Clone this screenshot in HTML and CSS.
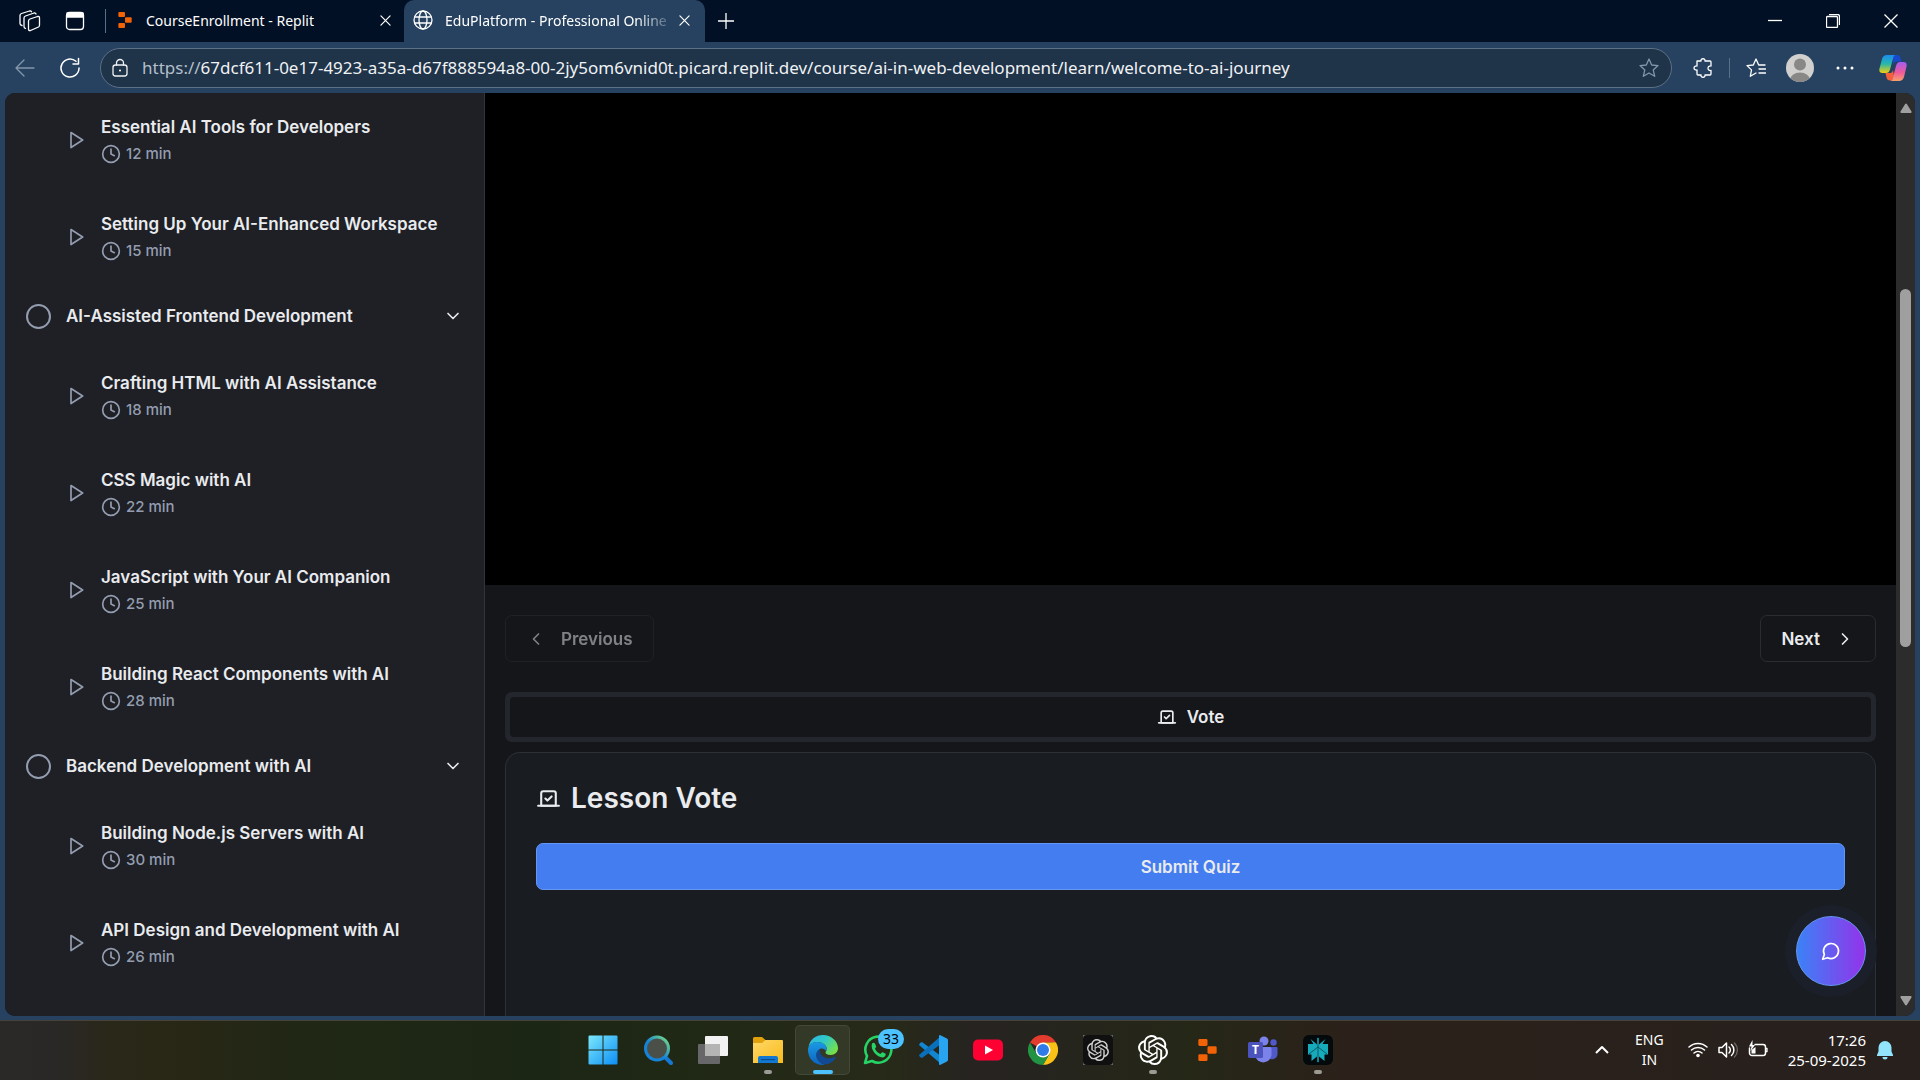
FILE: index.html
```html
<!DOCTYPE html>
<html lang="en">
<head>
<meta charset="utf-8">
<meta name="viewport" content="width=device-width, initial-scale=1">
<title>EduPlatform - Professional Online</title>
<link rel="stylesheet" href="styles.css">
</head>
<body>
<svg class="sprite" aria-hidden="true">
  <symbol id="play" viewBox="0 0 24 24"><path d="M6 3l14 9-14 9z"/></symbol>
  <symbol id="clock" viewBox="0 0 24 24"><circle cx="12" cy="12" r="10"/><path d="M12 6v6l4 2"/></symbol>
  <symbol id="down" viewBox="0 0 24 24"><path d="m6 9 6 6 6-6"/></symbol>
  <symbol id="vote" viewBox="0 0 24 24"><path d="m9 12 2 2 4-4"/><path d="M5 7c0-1.100.9-2 2-2h10a2 2 0 0 1 2 2v12H5V7Z"/><path d="M22 19H2"/></symbol>
  <symbol id="cross" viewBox="0 0 12 12"><path d="M1 1l10 10M11 1L1 11"/></symbol>
  <symbol id="replit" viewBox="0 0 20 24"><g fill="#f26207" stroke="none"><rect x="0" y="0" width="10" height="7.500" rx="1.500"/><rect x="10" y="8" width="10" height="8" rx="1.500"/><rect x="0" y="16.500" width="10" height="7.500" rx="1.500"/></g></symbol>
  <symbol id="knot" viewBox="0 0 24 24"><path stroke="none" fill="#fff" d="M22.2819 9.8211a5.9847 5.9847 0 0 0-.5157-4.9108 6.0462 6.0462 0 0 0-6.5098-2.9A6.0651 6.0651 0 0 0 4.9807 4.1818a5.9847 5.9847 0 0 0-3.9977 2.9 6.0462 6.0462 0 0 0 .7427 7.0966 5.98 5.98 0 0 0 .511 4.9107 6.051 6.051 0 0 0 6.5146 2.9001A5.9847 5.9847 0 0 0 13.2599 24a6.0557 6.0557 0 0 0 5.7718-4.2058 5.9894 5.9894 0 0 0 3.9977-2.9001 6.0557 6.0557 0 0 0-.7475-7.0729zm-9.022 12.6081a4.4755 4.4755 0 0 1-2.8764-1.0408l.1419-.0804 4.7783-2.7582a.7948.7948 0 0 0 .3927-.6813v-6.7369l2.02 1.1686a.071.071 0 0 1 .038.052v5.5826a4.504 4.504 0 0 1-4.4945 4.4944zm-9.6607-4.1254a4.4708 4.4708 0 0 1-.5346-3.0137l.142.0852 4.783 2.7582a.7712.7712 0 0 0 .7806 0l5.8428-3.3685v2.3324a.0804.0804 0 0 1-.0332.0615L9.74 19.9502a4.4992 4.4992 0 0 1-6.1408-1.6464zM2.3408 7.8956a4.485 4.485 0 0 1 2.3655-1.9728V11.6a.7664.7664 0 0 0 .3879.6765l5.8144 3.3543-2.0201 1.1685a.0757.0757 0 0 1-.071 0l-4.8303-2.7865A4.504 4.504 0 0 1 2.3408 7.872zm16.5963 3.8558L13.1038 8.364 15.1192 7.2a.0757.0757 0 0 1 .071 0l4.8303 2.7913a4.4944 4.4944 0 0 1-.6765 8.1042v-5.6772a.79.79 0 0 0-.407-.667zm2.0107-3.0231l-.142-.0852-4.7735-2.7818a.7759.7759 0 0 0-.7854 0L9.409 9.2297V6.8974a.0662.0662 0 0 1 .0284-.0615l4.8303-2.7866a4.4992 4.4992 0 0 1 6.6802 4.66zM8.3065 12.863l-2.02-1.1638a.0804.0804 0 0 1-.038-.0567V6.0742a4.4992 4.4992 0 0 1 7.3757-3.4537l-.142.0805L8.704 5.459a.7948.7948 0 0 0-.3927.6813zm1.0976-2.3654l2.602-1.4998 2.6069 1.4998v2.9994l-2.5974 1.4997-2.6067-1.4997Z"/></symbol>
</svg>

<div class="browser">
  <header class="tabstrip">
    <button class="bare" aria-label="Workspaces"><svg class="i22" viewBox="0 0 22 22"><path d="M9.500 11Q9.500 9.500 11 9l7.500-2.500Q20.500 6 20.500 8v7q0 1.500-1 2l-8 3.500q-2 .5-2-1.500zM6.500 18.500Q5 18 5 16.500V8Q5 6.500 6.500 6L15 3q1.500-.4 2 1M3 15.500Q1 15 1 13.500V5.500Q1 4 2.500 3.500L10.500 1q1.500-.4 2 .8"/></svg></button>
    <button class="bare tab-actions" aria-label="Tab actions"><svg class="i20" viewBox="0 0 20 20"><rect x="1.500" y="1.500" width="17" height="17" rx="3"/><path d="M2 2h16v4H2z" fill="#fff"/></svg></button>
    <span class="divider strip-divider"></span>
    <div class="tab">
      <svg class="tab-replit"><use href="#replit"/></svg>
      <span class="tab-title">CourseEnrollment - Replit</span>
      <button class="bare" aria-label="Close tab"><svg class="i11"><use href="#cross"/></svg></button>
    </div>
    <div class="tab active">
      <svg class="i20" viewBox="0 0 20 20"><circle cx="10" cy="10" r="9"/><ellipse cx="10" cy="10" rx="4" ry="9"/><path d="M2 7h16M2 13h16"/></svg>
      <span class="tab-title fade">EduPlatform - Professional Online</span>
      <button class="bare" aria-label="Close tab"><svg class="i11"><use href="#cross"/></svg></button>
    </div>
    <button class="bare new-tab" aria-label="New tab"><svg class="i16" viewBox="0 0 16 16"><path d="M8 0v16M0 8h16"/></svg></button>
    <div class="window-controls">
      <button class="bare" aria-label="Minimize"><svg class="i14" viewBox="0 0 14 14"><path d="M0 6.500h14"/></svg></button>
      <button class="bare" aria-label="Restore"><svg class="i14" viewBox="0 0 14 14"><rect x=".5" y="2.500" width="11" height="11" rx="1"/><path d="M3 .5h8.500a2 2 0 0 1 2 2V11"/></svg></button>
      <button class="bare" aria-label="Close"><svg class="i14" viewBox="0 0 14 14"><path d="M.5.5l13 13M13.500.5l-13 13"/></svg></button>
    </div>
  </header>

  <div class="toolbar">
    <button class="bare dim" aria-label="Back"><svg class="i20" viewBox="0 0 20 20"><path d="M19 10H1M9 2L1 10l8 8"/></svg></button>
    <button class="bare reload" aria-label="Reload"><svg class="i22" viewBox="0 0 22 22"><path d="M20 11a9 9 0 1 1-3-6.700M19.500 1.500v5.500H14" stroke-width="1.500"/></svg></button>
    <div class="address">
      <svg class="i20" viewBox="0 0 20 20"><rect x="3" y="7" width="14" height="11" rx="2.500"/><path d="M6.500 7V5a3.500 3.500 0 0 1 7 0v2"/><circle cx="10" cy="12.500" r="1" fill="#fff" stroke="none"/></svg>
      <label class="scheme" for="url">https://</label>
      <input id="url" class="url" type="text" value="67dcf611-0e17-4923-a35a-d67f888594a8-00-2jy5om6vnid0t.picard.replit.dev/course/ai-in-web-development/learn/welcome-to-ai-journey">
      <button class="bare dim" aria-label="Add to favorites"><svg class="i20" viewBox="0 0 20 20"><path d="M10 1l2.700 6 6.300.6-4.800 4.300 1.500 6.400L10 15l-5.700 3.300 1.500-6.400L1 7.600 7.300 7z"/></svg></button>
    </div>
    <div class="tools">
      <button class="bare" aria-label="Extensions"><svg class="i20" viewBox="0 0 20 20"><path d="M4 3h4c-.5-3 4.500-3 4 0h5a1 1 0 0 1 1 1v4c-4-.5-4 5 0 4.500V16a1 1 0 0 1-1 1h-5c.5 3-4.500 3-4 0H5a1 1 0 0 1-1-1v-4c-4 .5-4-4.500 0-4z"/></svg></button>
      <span class="divider"></span>
      <button class="bare" aria-label="Favorites"><svg class="i20" viewBox="0 0 20 20"><path d="M19 7h-6.300L10 1 7.300 7 1 7.600l4.500 4.300L4.300 18.300 10 15M13 11h6.500M13 15h6.500"/></svg></button>
      <button class="bare profile" aria-label="Profile"><svg class="i28" viewBox="0 0 28 28"><clipPath id="round"><circle cx="14" cy="14" r="14"/></clipPath><g clip-path="url(#round)" stroke="none"><rect width="28" height="28" fill="#d2d0ce"/><circle cx="14" cy="10.500" r="6" fill="#8a8886"/><ellipse cx="14" cy="26" rx="10" ry="7.500" fill="#8a8886"/></g></svg></button>
      <button class="bare menu" aria-label="Menu"><svg class="i18" viewBox="0 0 18 18"><g fill="#fff" stroke="none"><circle cx="2" cy="9" r="1.500"/><circle cx="9" cy="9" r="1.500"/><circle cx="16" cy="9" r="1.500"/></g></svg></button>
      <button class="bare" aria-label="Copilot"><svg class="i28" viewBox="0 0 28 28">
        <defs>
          <linearGradient id="cpA" x1="0" y1="0" x2="0" y2="1"><stop offset="0" stop-color="#1a8cf0"/><stop offset=".5" stop-color="#28b8a8"/><stop offset="1" stop-color="#f4d00c"/></linearGradient>
          <linearGradient id="cpB" x1="0" y1="0" x2="0" y2="1"><stop offset="0" stop-color="#a45cf0"/><stop offset=".55" stop-color="#f05a9a"/><stop offset="1" stop-color="#f8a06a"/></linearGradient>
        </defs>
        <g stroke="none"><path d="M13 1h5c2 0 3 1 3.500 3l1 3.500H18c-2 0-3 1-3.500 3z" fill="#1848cc"/><path d="M6.500 19h5c1 0 2-1 2.500-3l1 6-2 4.500h-2c-2 0-3-1-3.500-3z" fill="#f4603a"/><path d="M8 1h9c-2 0-2.500 1.500-3 3.500l-3 11c-.7 2.500-2 3.500-4 3.500H3.500C.8 19-.2 17 .5 14.500L3 5c.8-2.800 2.500-4 5-4z" fill="url(#cpA)"/><path d="M20 27h-9c2 0 2.500-1.500 3-3.500l3-11.500c.7-2.500 2-4 4-4h3.500c2.700 0 3.700 2 3 4.500L25 23c-.8 2.800-2.500 4-5 4z" fill="url(#cpB)"/></g></svg></button>
    </div>
  </div>

  <div class="viewport">
    <aside class="sidebar">
      <ul class="lessons">
        <li class="lesson"><svg class="i20"><use href="#play"/></svg><div><a href="#">Essential AI Tools for Developers</a><p class="duration"><svg class="i20"><use href="#clock"/></svg>12 min</p></div></li>
        <li class="lesson"><svg class="i20"><use href="#play"/></svg><div><a href="#">Setting Up Your AI-Enhanced Workspace</a><p class="duration"><svg class="i20"><use href="#clock"/></svg>15 min</p></div></li>
      </ul>
      <button class="module"><span class="ring"></span><span class="module-title">AI-Assisted Frontend Development</span><svg class="i20"><use href="#down"/></svg></button>
      <ul class="lessons">
        <li class="lesson"><svg class="i20"><use href="#play"/></svg><div><a href="#">Crafting HTML with AI Assistance</a><p class="duration"><svg class="i20"><use href="#clock"/></svg>18 min</p></div></li>
        <li class="lesson"><svg class="i20"><use href="#play"/></svg><div><a href="#">CSS Magic with AI</a><p class="duration"><svg class="i20"><use href="#clock"/></svg>22 min</p></div></li>
        <li class="lesson"><svg class="i20"><use href="#play"/></svg><div><a href="#">JavaScript with Your AI Companion</a><p class="duration"><svg class="i20"><use href="#clock"/></svg>25 min</p></div></li>
        <li class="lesson"><svg class="i20"><use href="#play"/></svg><div><a href="#">Building React Components with AI</a><p class="duration"><svg class="i20"><use href="#clock"/></svg>28 min</p></div></li>
      </ul>
      <button class="module"><span class="ring"></span><span class="module-title">Backend Development with AI</span><svg class="i20"><use href="#down"/></svg></button>
      <ul class="lessons">
        <li class="lesson"><svg class="i20"><use href="#play"/></svg><div><a href="#">Building Node.js Servers with AI</a><p class="duration"><svg class="i20"><use href="#clock"/></svg>30 min</p></div></li>
        <li class="lesson"><svg class="i20"><use href="#play"/></svg><div><a href="#">API Design and Development with AI</a><p class="duration"><svg class="i20"><use href="#clock"/></svg>26 min</p></div></li>
      </ul>
    </aside>

    <main class="main">
      <div class="video"></div>
      <div class="content">
        <nav class="pager">
          <button class="btn" disabled><svg class="i20" viewBox="0 0 24 24"><path d="m15 18-6-6 6-6"/></svg>Previous</button>
          <button class="btn">Next<svg class="i20" viewBox="0 0 24 24"><path d="m9 18 6-6-6-6"/></svg></button>
        </nav>
        <div class="tablist" role="tablist"><button class="tab-trigger" role="tab" aria-selected="true"><svg class="i20"><use href="#vote"/></svg>Vote</button></div>
        <section class="card">
          <h2 class="card-title"><svg class="i25"><use href="#vote"/></svg>Lesson Vote</h2>
          <button class="submit">Submit Quiz</button>
        </section>
      </div>
    </main>

    <div class="scrollbar" aria-hidden="true">
      <svg class="arrow" viewBox="0 0 12 10"><path d="M5 1.200a1.200 1.200 0 0 1 2 0L11.500 8.500a1 1 0 0 1-1 1.500h-9a1 1 0 0 1-1-1.500z"/></svg>
      <div class="track"><div class="thumb"></div></div>
      <svg class="arrow" viewBox="0 0 12 10"><path d="M5 8.800a1.200 1.200 0 0 0 2 0L11.500 1.500a1 1 0 0 0-1-1.500h-9a1 1 0 0 0-1 1.500z"/></svg>
    </div>
    <button class="chat" aria-label="Open chat"><svg class="i20" viewBox="0 0 24 24"><path d="M7.900 20A9 9 0 1 0 4 16.100L2 22Z"/></svg></button>
  </div>
</div>

<footer class="taskbar">
  <div class="apps">
    <button class="app" aria-label="Start"><svg class="i30" viewBox="0 0 30 30"><defs><linearGradient id="win" x1="0" y1="0" x2="1" y2="1"><stop offset="0" stop-color="#7ce8fc"/><stop offset="1" stop-color="#0c8ef4"/></linearGradient></defs><path fill="url(#win)" stroke="none" d="M1.500.5h13v14H.5v-13a1 1 0 0 1 1-1zM15.500.5h13a1 1 0 0 1 1 1v13h-14zM.5 15.500h14v14h-13a1 1 0 0 1-1-1zM15.500 15.500h14v13a1 1 0 0 1-1 1h-13z"/></svg></button>
    <button class="app" aria-label="Search"><svg class="i30" viewBox="0 0 30 30"><defs><linearGradient id="lens" x1="0" y1="1" x2="1" y2="0"><stop offset=".45" stop-color="#1483d8"/><stop offset="1" stop-color="#7de07c"/></linearGradient></defs><path d="M22 22l6 6" stroke="#1478d4" stroke-width="4"/><circle cx="14" cy="13.500" r="11.500" fill="#4a5048" stroke="url(#lens)" stroke-width="3"/></svg></button>
    <button class="app" aria-label="Task view"><svg class="i30" viewBox="0 0 30 30"><g stroke="none"><rect x="0" y="9" width="22" height="20" rx="1" fill="#67676a"/><rect x="7" y="1" width="23" height="20" rx="1" fill="#f2f2f2"/><path d="M7 9h15v12H7z" fill="#b4b4b4"/></g></svg></button>
    <button class="app running" aria-label="File Explorer"><svg class="i30" viewBox="0 0 30 30"><defs><linearGradient id="fold" x1="0" y1="0" x2="1" y2="1"><stop offset="0" stop-color="#ffd968"/><stop offset="1" stop-color="#f8ba1c"/></linearGradient></defs><g stroke="none"><path d="M0 3.500A1.500 1.500 0 0 1 1.500 2H9l4 3.500V9H0z" fill="#e0a10c"/><path d="M0 8h9l3.500-3H29a1 1 0 0 1 1 1v22H0z" fill="url(#fold)"/><path d="M5 28v-5a2 2 0 0 1 2-2h16a2 2 0 0 1 2 2v5z" fill="#1478d0"/><path d="M8 24h14v1.200H8z" fill="#074f92"/></g></svg></button>
    <button class="app current" aria-label="Microsoft Edge"><svg class="i30" viewBox="0 0 30 30"><defs><linearGradient id="e1" x1="0" y1="0" x2="1" y2=".6"><stop offset="0" stop-color="#2db4ea"/><stop offset=".5" stop-color="#30c8c8"/><stop offset="1" stop-color="#74e04c"/></linearGradient><linearGradient id="e2" x1="0" y1="0" x2="0" y2="1"><stop offset="0" stop-color="#1a9be6"/><stop offset="1" stop-color="#0d63bd"/></linearGradient></defs><g stroke="none"><path d="M.5 12C2 4 8 0 15 0c8 0 15 6 15 13 0 4-3 7-7.500 7-3 0-5-1-5-2.500 0-1 1.200-1.300 1.200-4C18.700 10 14 7 9.500 7 5 7 2 9 .5 12z" fill="url(#e1)"/><path d="M0 15c0-4.500 4-8 9-8 5.500 0 9.700 3 9.700 7l-.7 2c-1-2-4-3-6-2-2.500 1-4 4-3.500 7 .6 4 4 7.500 8.500 8.800C7 31 0 24 0 15z" fill="url(#e2)"/><path d="M12 14c-4 2-5 7-2 11.500 2 3 6 4.500 10 3.500 3-1 6-3.200 7.600-6 .5-1-.3-1.500-1-1C21 25 11 23 12 14z" fill="#114a93"/></g></svg></button>
    <button class="app" aria-label="WhatsApp, 33 unread"><svg class="i30" viewBox="0 0 30 30"><path d="M2 28l2-7A13 13 0 1 1 9 26z" fill="none" stroke="#25d366" stroke-width="2.600"/><path d="M9 8.500c1-1 2.500-1 3 .2l1.200 2.600c.3.700-.9 1.800-1.200 2.400 1.200 2.600 3 4.200 5.400 5.200.7-.6 1.500-1.900 2.200-1.700l2.700 1.300c1 .6.200 2.500-.8 3.300C17.500 25 6.500 16 9 8.500z" fill="#25d366" stroke="none"/></svg><span class="badge">33</span></button>
    <button class="app" aria-label="Visual Studio Code"><svg class="i30" viewBox="0 0 30 30"><g stroke="none"><path d="M2 8l2-1 19 14v8L1 10z" fill="#1286d0"/><path d="M2 22l2 1L23 9V1L1 20z" fill="#0a70bc"/><path d="M22 0l7 3.500a2 2 0 0 1 1 1.700v19.600a2 2 0 0 1-1 1.700L22 30c-1 0-1.200-1-1-2V2c-.2-1 0-2 1-2z" fill="#28a4f0"/></g></svg></button>
    <button class="app" aria-label="YouTube"><svg class="i30" viewBox="0 0 30 30"><rect x="0" y="4.500" width="30" height="21" rx="5" fill="#ff0033" stroke="none"/><path d="M12 10.500l8 4.500-8 4.500z" fill="#fff" stroke="none"/></svg></button>
    <button class="app" aria-label="Google Chrome"><svg class="i30" viewBox="0 0 30 30"><g stroke="none"><path d="M15 15L2 7.500A15 15 0 0 1 28 7.500H15z" fill="#e33b2e"/><path d="M28 7.500A15 15 0 0 1 15 30l6.500-11.200L22 8z" fill="#fbc116"/><path d="M28 7.500H15V15l6.500 3.800A7.500 7.500 0 0 0 21.500 11.200z" fill="#fbc116"/><path d="M2 7.500A15 15 0 0 0 15 30l6.500-11.200L15 20 8.500 18.800z" fill="#229342"/><circle cx="15" cy="15" r="7.500" fill="#fff"/><circle cx="15" cy="15" r="6" fill="#2f7bea"/></g></svg></button>
    <button class="app" aria-label="ChatGPT web app"><svg class="i30" viewBox="0 0 30 30"><path d="M0 0h30v30H0z" fill="#6b6b6b" stroke="none"/><rect width="30" height="30" rx="4" fill="#101010" stroke="none"/><use href="#knot" x="4" y="4" width="22" height="22" opacity=".8"/></svg></button>
    <button class="app running" aria-label="ChatGPT"><svg class="i30"><use href="#knot"/></svg></button>
    <button class="app" aria-label="Replit"><svg class="app-replit"><use href="#replit"/></svg></button>
    <button class="app" aria-label="Microsoft Teams"><svg class="i30" viewBox="0 0 30 30"><g stroke="none"><circle cx="25.500" cy="7.500" r="3.200" fill="#5059c9"/><path d="M20 12h8.500a1 1 0 0 1 1 1v6a5.500 5.500 0 0 1-9 4z" fill="#5059c9"/><circle cx="16" cy="6" r="4.500" fill="#7b83eb"/><path d="M9 12h13a1.500 1.500 0 0 1 1.500 1.500V20a8.300 8.300 0 0 1-16.500 0v-8z" fill="#7b83eb"/><rect x="0" y="7" width="15" height="16" rx="1.500" fill="#4b53bc"/><text x="7.500" y="19" text-anchor="middle" class="teams-letter">T</text></g></svg></button>
    <button class="app running" aria-label="Perplexity"><svg class="i30" viewBox="0 0 30 30"><rect width="30" height="30" rx="6" fill="#04090b" stroke="none"/><path d="M5 9h5.500L7.500 4 14 9.500V3h2v6.500L22.500 4l-3 5H25v10.500h-3.500V26L16 21.500V27h-2v-5.500L8.500 26v-6.500H5z" fill="#17aabb" stroke="none"/><path d="M15 3v24M15 12L6 19M15 12l9 7" stroke="#0a5a66" stroke-width="1"/></svg></button>
  </div>
  <div class="tray">
    <button class="bare" aria-label="Show hidden icons"><svg class="i14" viewBox="0 0 14 14"><path d="M1 10l6-6 6 6" stroke-width="2"/></svg></button>
    <button class="bare lang">ENG<br>IN</button>
    <div class="status">
      <svg class="i20" viewBox="0 0 20 20"><path d="M1 7a13 13 0 0 1 18 0M3.500 10a9.500 9.500 0 0 1 13 0M6 13a6 6 0 0 1 8 0" stroke-width="1.500"/><circle cx="10" cy="15.500" r="1.800" fill="#fff" stroke="none"/></svg>
      <svg class="i20" viewBox="0 0 20 20"><path d="M1 7.500h3L8.500 3v14L4 12.500H1zM11 7a4 4 0 0 1 0 6M13.500 4.500a7.500 7.500 0 0 1 0 11" stroke-width="1.500"/><path d="M16.500 3a10 10 0 0 1 0 14" stroke="#6a6662"/></svg>
      <svg class="i20" viewBox="0 0 20 20"><path d="M7 4.500h8a2.500 2.500 0 0 1 2.500 2.500v6a2.500 2.500 0 0 1-2.500 2.500H4A2.500 2.500 0 0 1 1.500 13V8" stroke-width="1.500"/><path d="M18 8.500h1v3h-1" /><path d="M4.500 0L1 6.500h2.500L2.500 11 7 5H4.500zM3.500 10l4-3v6.500h-4z" fill="#fff" stroke="none"/></svg>
    </div>
    <button class="bare datetime">17:26<br>25-09-2025</button>
    <button class="bare" aria-label="Notifications"><svg class="i20" viewBox="0 0 20 20"><path d="M10 1a6.500 6.500 0 0 1 6.500 6.500v4L18 15v1H2v-1l1.500-3.500v-4A6.500 6.500 0 0 1 10 1zM7.500 17h5a2.500 2.500 0 0 1-5 0z" fill="#92e4fc" stroke="none"/></svg></button>
  </div>
</footer>
</body>
</html>
```

FILE: styles.css
```css
* { box-sizing: border-box; }

body {
  margin: 0;
  height: 100vh;
  overflow: hidden;
  display: flex;
  flex-direction: column;
  background: #264260;
  color: #fff;
  font-family: "Noto Sans", "Open Sans", sans-serif;
  font-size: 15px;
}

button, input { font: inherit; color: inherit; }
button { cursor: pointer; }
a { color: inherit; text-decoration: none; }
ul, p, h2 { margin: 0; padding: 0; list-style: none; }

svg {
  display: block;
  flex: none;
  fill: none;
  stroke: currentColor;
  stroke-width: 1.3;
  stroke-linecap: round;
  stroke-linejoin: round;
}
.sprite { position: absolute; width: 0; height: 0; }
.i11 { width: 11px; height: 11px; }
.i14 { width: 14px; height: 14px; stroke-linecap: butt; }
.i16 { width: 16px; height: 16px; }
.i18 { width: 18px; height: 18px; }
.i20 { width: 20px; height: 20px; }
.i22 { width: 22px; height: 22px; }
.i25 { width: 25px; height: 25px; }
.i28 { width: 28px; height: 28px; }
.i30 { width: 30px; height: 30px; }

.bare { padding: 0; border: 0; background: none; }
.dim { color: #8496aa; }
.divider { width: 1px; height: 20px; background: #587089; }

/* Browser frame */
.browser { flex: 1; min-height: 0; display: flex; flex-direction: column; }

.tabstrip {
  display: flex;
  align-items: center;
  height: 42px;
  padding-left: 19px;
  background: #021025;
}
.tab-actions { margin-left: 24px; }
.strip-divider { height: 24px; margin-left: 20px; }
.tab {
  display: flex;
  align-items: center;
  gap: 12px;
  width: 298px;
  height: 42px;
  padding: 0 15px 2px 9px;
}
.tab .tab-replit { width: 16px; height: 16px; margin: 0 1px 0 2px; }
.tab:not(.active) { padding-right: 13px; }
.tab.active { width: 301px; background: #264260; border-radius: 10px 10px 0 0; }
.tab-title { flex: 1; white-space: nowrap; font-size: 14px; }
.fade { mask-image: linear-gradient(90deg, #000 86%, transparent 104%); }
.new-tab { margin-left: 13px; }
.window-controls { display: flex; margin-left: auto; gap: 44px; padding-right: 22px; }

.toolbar { display: flex; align-items: center; height: 51px; padding: 0 13px 0 15px; }
.reload { margin: 0 19px 0 24px; }
.address {
  flex: 1;
  display: flex;
  align-items: center;
  height: 40px;
  padding: 0 12px 0 9px;
  border: 1px solid #5d7186;
  border-radius: 20px;
  background: #1f3349;
  color: #f0f2f4;
  font-size: 17px;
}
.scheme { margin-left: 12px; color: #b4bfca; }
.url { flex: 1; min-width: 0; padding: 0; border: 0; outline: 0; background: none; }
.tools { display: flex; align-items: center; gap: 16px; padding-left: 21px; }
.profile { margin-left: 4px; }
.menu { margin: 0 9px 0 6px; }

/* Page shown in the browser */
.viewport {
  position: relative;
  flex: 1;
  min-height: 0;
  display: flex;
  margin: 0 5px 4px;
  overflow: hidden;
  border-radius: 10px;
  background: #15161a;
  color: #e9ebee;
  font-family: Inter, sans-serif;
  font-size: 17px;
  font-weight: 600;
}
.viewport svg { stroke-width: 2; }

.sidebar {
  display: flex;
  flex-direction: column;
  gap: 40px;
  width: 480px;
  padding: 20px 21px 0;
  border-right: 1px solid #30343d;
  background: #1e2025;
}
.lessons { display: flex; flex-direction: column; gap: 44px; padding-left: 40px; }
.lesson { display: flex; align-items: center; gap: 15px; color: #949db0; }
.lesson a { display: block; color: #e9ebee; line-height: 29px; white-space: nowrap; }
.duration { display: flex; align-items: center; gap: 5px; font-size: 15px; font-weight: 500; line-height: 24px; }
.module {
  display: flex;
  align-items: center;
  gap: 15px;
  padding: 0;
  border: 0;
  background: none;
  line-height: 26px;
  text-align: left;
}
.module-title { flex: 1; }
.ring { width: 25px; height: 25px; border: 2px solid #949db0; border-radius: 50%; }

.main { flex: 1; min-width: 0; display: flex; flex-direction: column; }
.video { flex: 1; background: #000; }
.content { padding: 30px 20px 0; }
.pager { display: flex; justify-content: space-between; margin-bottom: 30px; }
.btn {
  display: flex;
  align-items: center;
  gap: 15px;
  height: 47px;
  padding: 0 20px;
  border: 1px solid #2a2c32;
  border-radius: 7px;
  background: none;
}
.btn:disabled { opacity: .5; }
.tablist { padding: 5px; border-radius: 7px; background: #24262d; }
.tab-trigger {
  display: flex;
  align-items: center;
  justify-content: center;
  gap: 10px;
  width: 100%;
  height: 40px;
  border: 0;
  border-radius: 4px;
  background: #15161a;
}
.card {
  min-height: 264px;
  margin-top: 10px;
  padding: 30px;
  border: 1px solid #2c3037;
  border-bottom: 0;
  border-radius: 15px 15px 0 0;
  background: #191c20;
}
.card-title {
  display: flex;
  align-items: center;
  gap: 10px;
  margin-bottom: 30px;
  font-size: 28px;
  font-weight: 600;
  line-height: 30px;
}
.submit {
  width: 100%;
  height: 47px;
  border: 1px solid #6596f4;
  border-radius: 7px;
  background: #447df0;
}

.scrollbar {
  display: flex;
  flex-direction: column;
  align-items: center;
  gap: 10px;
  width: 19px;
  padding: 10px 0;
  background: #2c2c2c;
}
.arrow { width: 12px; height: 10px; }
.scrollbar .arrow { fill: #9f9f9f; stroke: none; }
.track { flex: 1; width: 11px; }
.thumb { height: 41.5%; margin-top: 166px; border-radius: 6px; background: #9f9f9f; }

.chat {
  position: absolute;
  right: 49px;
  bottom: 30px;
  display: grid;
  place-items: center;
  width: 70px;
  height: 70px;
  border: 1px solid #6596f4;
  border-radius: 50%;
  background: linear-gradient(90deg, #3b82f6, #9333ea);
  box-shadow: 0 0 0 11px #1a1f29;
  color: #fff;
}

/* Taskbar */
.taskbar {
  display: grid;
  grid-template-columns: 1fr auto 1fr;
  height: 60px;
  padding-bottom: 1px;
  border-top: 1px solid #45423a;
  background: linear-gradient(90deg, #2a2928, #2a2826 3%, #2a2818 6%, #282716 10%, #202715 16%, #1c2614 28%, #212916 38%, #272a18 46%, #262321 51%, #252717 62%, #2b211a 70%, #27201d);
}
.apps { grid-column: 2; display: flex; align-items: center; }
.app {
  position: relative;
  display: grid;
  place-items: center;
  width: 55px;
  height: 50px;
  padding: 0;
  border: 0;
  border-radius: 5px;
  background: none;
}
.app.current { background: #ffffff12; box-shadow: inset 0 0 0 1px #ffffff14; }
.app.running::after, .app.current::after {
  content: "";
  position: absolute;
  bottom: 1px;
  width: 8px;
  height: 4px;
  border-radius: 2px;
  background: #9c9a94;
}
.app.current::after { width: 20px; background: #4cc2ff; }
.app-replit { width: 19px; height: 22px; }
.badge {
  position: absolute;
  top: 4px;
  right: 1px;
  width: 26px;
  border-radius: 10px;
  background: #4cc2ff;
  color: #000;
  font-size: 14px;
  line-height: 20px;
}
.teams-letter { fill: #fff; font: bold 12px "Noto Sans", sans-serif; }
.tray { display: flex; align-items: center; justify-content: flex-end; padding-right: 25px; font-size: 14px; line-height: 20px; }
.lang { margin: 0 24px 0 26px; }
.status { display: flex; gap: 10px; }
.datetime { margin: 0 9px 0 20px; font-size: 15px; text-align: right; }
```
